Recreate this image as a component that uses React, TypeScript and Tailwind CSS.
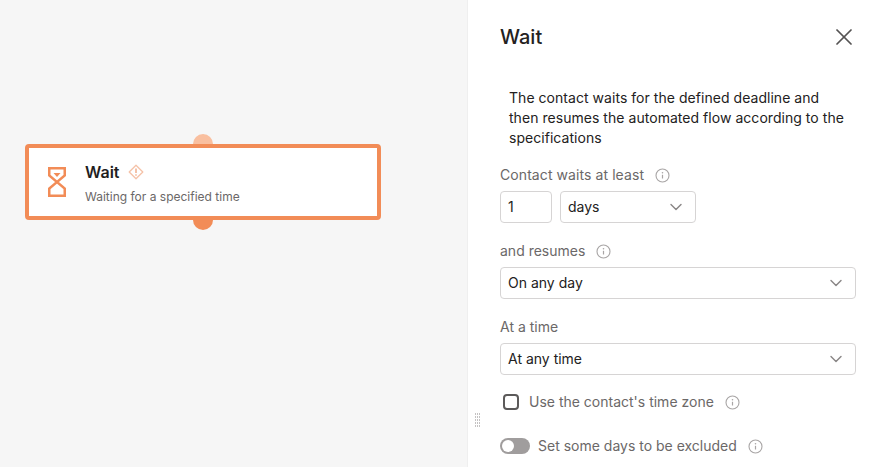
import React from 'react';
import { X, ChevronDown } from 'lucide-react';

const InfoIcon = () => (
  <svg width="15" height="15" viewBox="0 0 15 15" fill="none" className="shrink-0">
    <circle cx="7.5" cy="7.5" r="6.5" stroke="#a8a5a5" strokeWidth="1.1" />
    <path d="M7.5 6.8v3.7" stroke="#a8a5a5" strokeWidth="1.2" />
    <circle cx="7.5" cy="4.7" r="0.8" fill="#a8a5a5" />
  </svg>
);

const Hourglass = () => (
  <svg width="18" height="30" viewBox="0 0 18 30" fill="none">
    <path
      d="M1.250 8.500V1.250h15.500V8.500L1.250 21.500v7.250h15.500V21.500z"
      stroke="#f28c57"
      strokeWidth="2.500"
    />
    <path d="M5.500 6h7l-3.500 4z" fill="#f28c57" />
  </svg>
);

const WarnIcon = () => (
  <svg width="16" height="16" viewBox="0 0 16 16" fill="none">
    <path d="M8 1.200l6.800 6.800-6.800 6.800-6.800-6.800z" stroke="#f5c2a8" strokeWidth="1.300" strokeLinejoin="round" />
    <path d="M8 4.500v4.500" stroke="#eea17a" strokeWidth="1.300" />
    <circle cx="8" cy="11" r="0.800" fill="#eea17a" />
  </svg>
);

const Label = ({ text, info = true, className = '' }: { text: string; info?: boolean; className?: string }) => (
  <div className={`flex items-center gap-[11px] h-5 text-sm text-[#6b6868] ${className}`}>
    <span>{text}</span>
    {info && <InfoIcon />}
  </div>
);

const Select = ({ value, className }: { value: string; className: string }) => (
  <div className={`flex items-center justify-between h-8 pl-[7px] pr-[9px] bg-white border border-[#d6d4d4] rounded-sm text-sm text-[#232121] ${className}`}>
    <span>{value}</span>
    <ChevronDown size={20} color="#8a8787" strokeWidth={1.7} />
  </div>
);

const Handle = ({ className }: { className: string }) => (
  <div className={`absolute left-[168px] w-5 h-5 rounded-full ${className}`} />
);

export default function App() {
  return (
    <div className="flex w-[882px] h-[467px] overflow-hidden bg-white font-['Inter',sans-serif]">
      <div className="relative w-[468px] h-full shrink-0 bg-[#f6f6f6] border-r border-[#efefef]">
        <div className="absolute left-[25px] top-[144px] w-[356px] h-[76px]">
          <Handle className="-top-[10px] bg-[#f9bf9f]" />
          <Handle className="-bottom-[10px] bg-[#f28c57]" />
          <div className="relative flex items-center h-full pl-[19px] bg-white border-4 border-[#f28c57] rounded">
            <Hourglass />
            <div className="ml-[19px] pt-[3px]">
              <div className="flex items-center gap-[9px] h-5">
                <span className="text-base font-semibold text-[#1f1e1e]">Wait</span>
                <WarnIcon />
              </div>
              <div className="mt-[7px] text-xs leading-4 text-[#6b6868]">Waiting for a specified time</div>
            </div>
          </div>
        </div>
      </div>

      <div className="relative flex-1 pl-[32px] pr-[26px]">
        <div className="flex items-center justify-between h-6 mt-[25px]">
          <h2 className="text-xl font-medium text-[#232121]">Wait</h2>
          <X className="-mr-[2px]" size={28} color="#555353" strokeWidth={1.5} />
        </div>

        <p className="mt-[39px] ml-[9px] w-[340px] text-sm leading-5 tracking-[0.04px] text-[#232121]">
          The contact waits for the defined deadline and then resumes the automated flow according to the specifications
        </p>

        <div className="mt-[17px]">
          <Label text="Contact waits at least" className="tracking-[0.08px]" />
          <div className="flex gap-2 mt-[6px]">
            <div className="flex items-center w-[52px] h-8 pl-[7px] bg-white border border-[#d6d4d4] rounded-sm text-sm text-[#232121]">1</div>
            <Select value="days" className="w-[136px]" />
          </div>
        </div>

        <div className="mt-[18px]">
          <Label text="and resumes" />
          <Select value="On any day" className="mt-[6px]" />
        </div>

        <div className="mt-[18px]">
          <Label text="At a time" info={false} />
          <Select value="At any time" className="mt-[6px]" />
        </div>

        <div className="flex items-center h-5 mt-[17px] ml-[3px] text-sm text-[#6b6868]">
          <div className="w-4 h-4 bg-white border-2 border-[#5c5a5a] rounded-sm" />
          <span className="ml-[10px]">Use the contact's time zone</span>
          <span className="ml-[11px]"><InfoIcon /></span>
        </div>

        <div className="flex items-center h-5 mt-[24px] text-sm text-[#6b6868]">
          <div className="flex items-center w-[30px] h-4 pl-[2px] bg-[#a09d9d] rounded-full">
            <div className="w-3 h-3 bg-white rounded-full" />
          </div>
          <span className="ml-2">Set some days to be excluded</span>
          <span className="ml-[11px]"><InfoIcon /></span>
        </div>

        <div className="absolute left-[7px] top-[413px] grid grid-cols-3 gap-px">
          {Array.from({ length: 15 }).map((_, i) => (
            <div key={i} className="w-px h-[2px] bg-[#c4c2c2]" />
          ))}
        </div>
      </div>
    </div>
  );
}
